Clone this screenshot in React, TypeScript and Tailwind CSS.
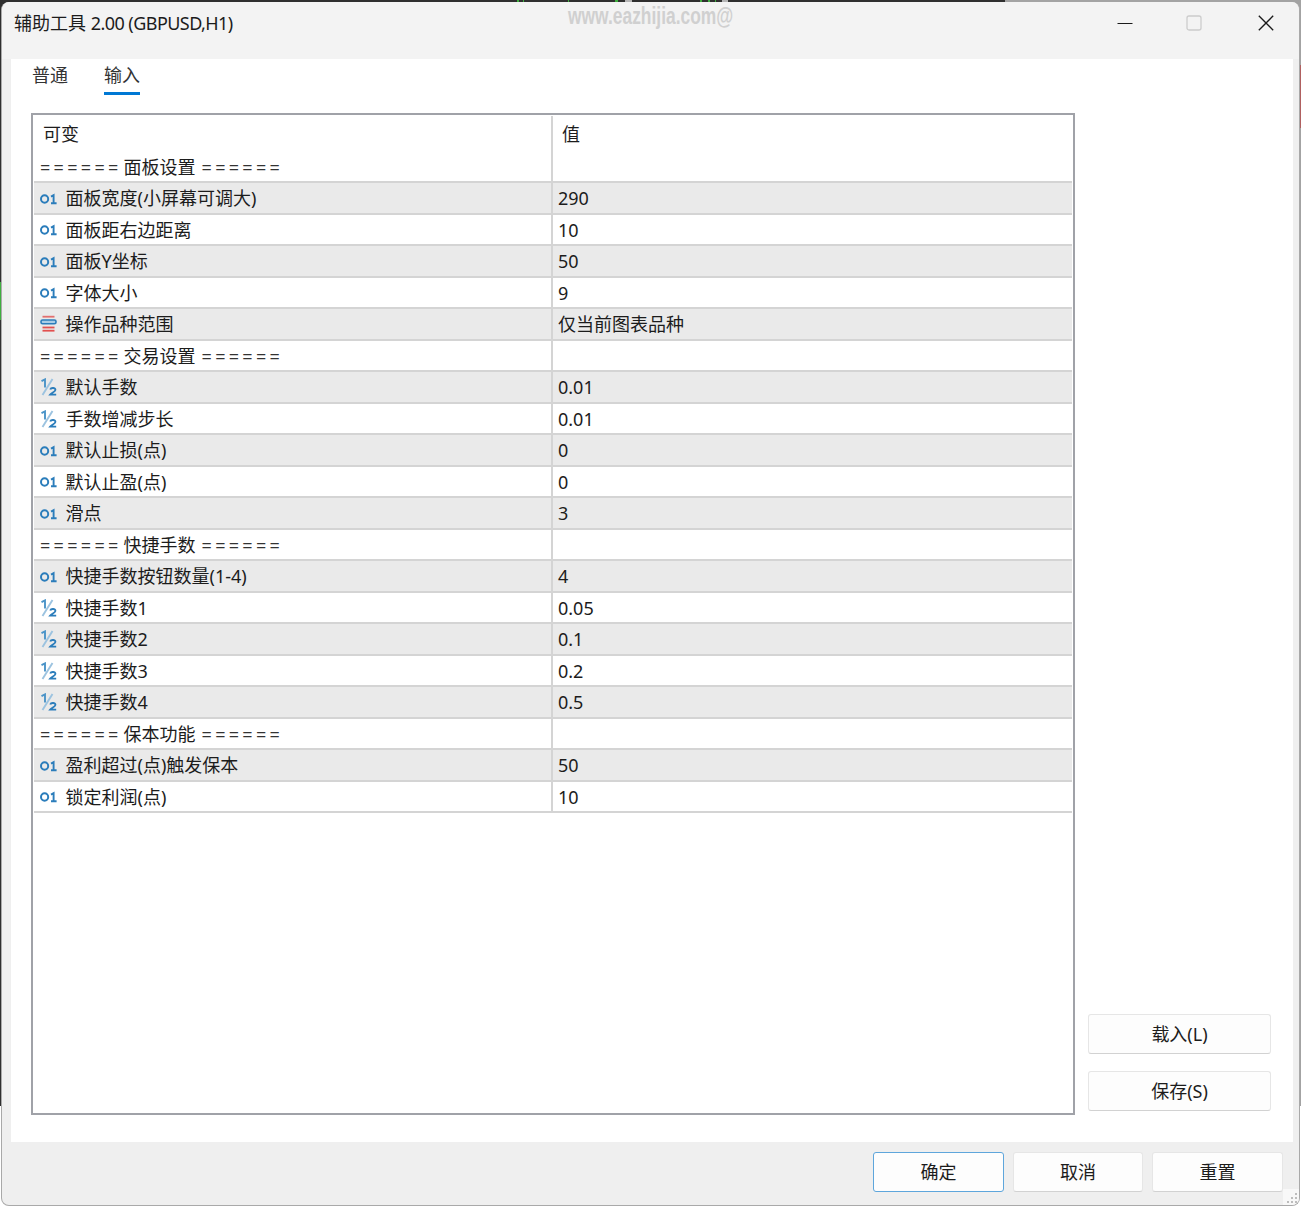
import React from "react";

type Row =
  | { t: "s"; a: string }
  | { t: "i" | "d" | "e"; l: string; v: string };

const rows: Row[] = [
  { t: "s", a: "面板设置" },
  { t: "i", l: "面板宽度(小屏幕可调大)", v: "290" },
  { t: "i", l: "面板距右边距离", v: "10" },
  { t: "i", l: "面板Y坐标", v: "50" },
  { t: "i", l: "字体大小", v: "9" },
  { t: "e", l: "操作品种范围", v: "仅当前图表品种" },
  { t: "s", a: "交易设置" },
  { t: "d", l: "默认手数", v: "0.01" },
  { t: "d", l: "手数增减步长", v: "0.01" },
  { t: "i", l: "默认止损(点)", v: "0" },
  { t: "i", l: "默认止盈(点)", v: "0" },
  { t: "i", l: "滑点", v: "3" },
  { t: "s", a: "快捷手数" },
  { t: "i", l: "快捷手数按钮数量(1-4)", v: "4" },
  { t: "d", l: "快捷手数1", v: "0.05" },
  { t: "d", l: "快捷手数2", v: "0.1" },
  { t: "d", l: "快捷手数3", v: "0.2" },
  { t: "d", l: "快捷手数4", v: "0.5" },
  { t: "s", a: "保本功能" },
  { t: "i", l: "盈利超过(点)触发保本", v: "50" },
  { t: "i", l: "锁定利润(点)", v: "10" },
];

function TypeIcon({ t }: { t: "i" | "d" | "e" }) {
  if (t === "i")
    return (
      <svg width="18" height="12" viewBox="0 0 18 12" className="shrink-0 mt-[1px]">
        <ellipse cx="4.6" cy="6" rx="3.6" ry="3.7" fill="none" stroke="#2b7dbb" strokeWidth="2" />
        <path d="M11 3.6 L13.6 2.2 V10.6 M11 10.2 H16.6" fill="none" stroke="#2b7dbb" strokeWidth="1.9" />
      </svg>
    );
  if (t === "d")
    return (
      <svg width="18" height="18" viewBox="0 0 18 18" className="shrink-0">
        <path d="M1.5 3.2 L5 1.4 V9.5" fill="none" stroke="#4b94c8" strokeWidth="1.9" />
        <path d="M2.5 17 L12.5 1" fill="none" stroke="#9cc3e0" strokeWidth="1.9" />
        <path d="M10.2 11.5 C11 9.4 15.6 9.6 15.4 12 C15.2 13.8 11.8 14.6 10.2 16.6 H16.2" fill="none" stroke="#2b7dbb" strokeWidth="1.9" />
      </svg>
    );
  return (
    <svg width="18" height="18" viewBox="0 0 18 18" className="shrink-0">
      <rect x="2.5" y="0.8" width="12" height="1.8" fill="#e2706f" />
      <rect x="1" y="5" width="15" height="3.8" rx="1.6" fill="#a9cde6" stroke="#2b7dbb" strokeWidth="1.6" />
      <rect x="2.5" y="11.6" width="12" height="1.8" fill="#e2504f" />
      <rect x="2.5" y="14.8" width="12" height="1.8" fill="#e2504f" />
    </svg>
  );
}

function Btn({ label, className = "", primary = false }: { label: string; className?: string; primary?: boolean }) {
  return (
    <div
      className={`flex items-center justify-center h-[40px] rounded-[3px] bg-[#fdfdfd] text-[18px] text-[#1c1c1c] border ${
        primary ? "border-[#5ea6dc]" : "border-[#e6e6e6] border-b-[#d2d2d2]"
      } ${className}`}
    >
      {label}
    </div>
  );
}

export default function App() {
  return (
    <div
      className="relative w-[1301px] h-[1206px] overflow-hidden bg-[linear-gradient(to_right,#2f2f2f_0,#2f2f2f_1005px,#a3a3a3_1005px,#a3a3a3_100%)] pt-[2px] text-[#1c1c1c]"
      style={{ fontFamily: '"Noto Sans", "Noto Sans CJK SC", sans-serif' }}
    >
      {/* desktop behind the window */}
      <div className="absolute left-0 top-[282px] w-[1px] h-[38px] bg-[#3fae3f]" />
      <div className="absolute right-0 top-[65px] w-[1px] h-[63px] bg-[#b06060]" />
      <div className="absolute left-[517px] top-0 w-[2px] h-[2px] bg-[#3fae3f]" />
      <div className="absolute left-[523px] top-0 w-[1px] h-[2px] bg-[#3fae3f]" />
      <div className="absolute left-[568px] top-0 w-[1px] h-[2px] bg-[#3fae3f]" />
      <div className="absolute left-[615px] top-0 w-[3px] h-[2px] bg-[#3fae3f]" />
      <div className="absolute left-[625px] top-0 w-[7px] h-[2px] bg-[#b5b5b5]" />
      <div className="absolute left-[700px] top-0 w-[2px] h-[2px] bg-[#3fae3f]" />
      <div className="absolute left-[708px] top-0 w-[2px] h-[2px] bg-[#3fae3f]" />
      <div className="absolute left-[715px] top-0 w-[1px] h-[2px] bg-[#3fae3f]" />
      <div className="absolute left-[722px] top-0 w-[6px] h-[2px] bg-[#b5b5b5]" />
      <div className="absolute left-0 right-0 bottom-0 h-[100px] bg-white" />

      <div className="relative ml-[1px] w-[1299px] h-[1204px] rounded-[8px] bg-[#efefef] border border-[#a9a9a9] border-t-0 flex flex-col overflow-hidden">
        {/* title bar */}
        <div className="relative h-[57px] shrink-0 bg-[#f3f3f3] flex pl-[12px] pt-[9px]">
          <span className="text-[18px] leading-[24px]">
            辅助工具 <span className="tracking-[-0.55px]">2.00 (GBPUSD,H1)</span>
          </span>
          <span
            className="absolute left-[566px] top-[1px] text-[24px] leading-[26px] font-bold text-[#d0d0d0] scale-x-[0.725] origin-left whitespace-nowrap"
            style={{ fontFamily: '"Liberation Sans", sans-serif' }}
          >
            www.eazhijia.com@
          </span>
          <div className="ml-auto flex items-start pr-[25px] pt-[2px] gap-[48px]">
            <svg width="16" height="20" viewBox="0 0 16 20"><path d="M0.5 10.5 H15.5" stroke="#1a1a1a" strokeWidth="1.2" /></svg>
            <svg width="16" height="20" viewBox="0 0 16 20" className="ml-[5px]"><rect x="1" y="3" width="14" height="14" rx="2" fill="none" stroke="#cccccc" strokeWidth="1.3" /></svg>
            <svg width="16" height="20" viewBox="0 0 16 20" className="ml-[8px]"><path d="M0.8 2.8 L15.2 17.2 M15.2 2.8 L0.8 17.2" stroke="#1a1a1a" strokeWidth="1.3" /></svg>
          </div>
        </div>

        {/* content panel */}
        <div className="ml-[9px] w-[1282px] h-[1083px] shrink-0 bg-white flex flex-col">
          <div className="h-[54px] shrink-0 flex pl-[21px] gap-[36px] text-[18px]">
            <div className="pt-[3px] leading-[26px] text-[#333]">普通</div>
            <div className="h-[36px] pt-[3px] leading-[26px] border-b-[3px] border-[#0078d4] text-[#333]">输入</div>
          </div>
          <div className="flex pl-[20px]">
            {/* table */}
            <div className="w-[1044px] h-[1002px] shrink-0 border-2 border-[#a0a2a8] pl-[1px] pt-[1px]">
              <div className="flex h-[35.5px] w-[1038px]">
                <div className="w-[519px] shrink-0 border-r-2 border-[#d4d4d4] pl-[9px] text-[18px] leading-[36px]">可变</div>
                <div className="pl-[9px] text-[18px] leading-[36px]">值</div>
              </div>
              {rows.map((r, i) => (
                <div
                  key={i}
                  className={`flex h-[31.5px] w-[1038px] border-b-2 border-[#d4d4d4] text-[18px] leading-[28px] ${
                    r.t !== "s" && i % 2 === 1 ? "bg-[#eaeaea]" : "bg-white"
                  }`}
                >
                  <div className="w-[519px] shrink-0 border-r-2 border-[#d4d4d4] flex items-center pt-[1px] pl-[6px] whitespace-nowrap">
                    {r.t === "s" ? (
                      <>
                        <span className="tracking-[3.3px] text-[#333]">======</span>
                        <span className="ml-[2px]">{r.a}</span>
                        <span className="ml-[6px] tracking-[3.3px] text-[#333]">======</span>
                      </>
                    ) : (
                      <>
                        <TypeIcon t={r.t} />
                        <span className="ml-[7.5px]">{r.l}</span>
                      </>
                    )}
                  </div>
                  <div className="pl-[5px] pt-[1px] flex items-center">{r.t === "s" ? "" : r.v}</div>
                </div>
              ))}
            </div>
            {/* side buttons */}
            <div className="flex flex-col justify-end gap-[17px] ml-[13px] pb-[4px] w-[183px]">
              <Btn label="载入(L)" />
              <Btn label="保存(S)" />
            </div>
          </div>
        </div>

        {/* footer */}
        <div className="relative flex-1 flex justify-end gap-[9px] pt-[10px] pr-[16px]">
          <Btn label="确定" primary className="w-[131px]" />
          <Btn label="取消" className="w-[130px]" />
          <Btn label="重置" className="w-[131px]" />
          <svg width="16" height="16" viewBox="0 0 16 16" className="absolute right-0 bottom-0">
            <rect width="16" height="16" fill="#f8f8f8" />
            <g fill="#bdbdbd">
              <rect x="12" y="4" width="2" height="2" />
              <rect x="8" y="8" width="2" height="2" />
              <rect x="12" y="8" width="2" height="2" />
              <rect x="4" y="12" width="2" height="2" />
              <rect x="8" y="12" width="2" height="2" />
              <rect x="12" y="12" width="2" height="2" />
            </g>
          </svg>
        </div>
      </div>
    </div>
  );
}
